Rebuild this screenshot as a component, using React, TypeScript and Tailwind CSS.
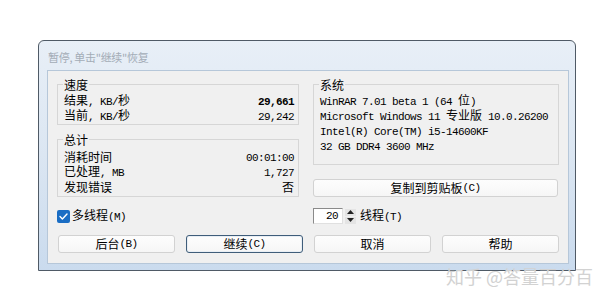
import React from "react";

const CJK = "font-['Noto_Sans_CJK_SC',sans-serif] text-[12px]";
const MONO = "font-['Liberation_Mono','Noto_Sans_CJK_SC',monospace] text-[11px] tracking-[-0.6px]";

function T({ s, bold = false }: { s: string; bold?: boolean }) {
  const parts = s.split(/([\x00-\x7F]+)/).filter((p) => p.length > 0);
  return (
    <>
      {parts.map((p, i) =>
        /^[\x00-\x7F]+$/.test(p) ? (
          <span key={i} className={`${MONO} whitespace-pre ${bold ? "font-bold" : ""}`}>
            {p}
          </span>
        ) : (
          <span key={i} className={CJK}>
            {p}
          </span>
        )
      )}
    </>
  );
}

function Row({ label, value, bold = false }: { label: string; value: string; bold?: boolean }) {
  return (
    <div className="flex items-center justify-between h-[15px] leading-[15px] pl-[1px] pr-[3px] text-black">
      <span>
        <T s={label} />
      </span>
      <span>
        <T s={value} bold={bold} />
      </span>
    </div>
  );
}

function Btn({ label, def = false }: { label: string; def?: boolean }) {
  return (
    <div
      className={`w-[117px] h-[18px] rounded-[3px] flex items-center justify-center leading-[16px] text-black bg-gradient-to-b from-[#fdfdfd] to-[#f6f6f6] ${
        def ? "border border-[#3f5d7a] shadow-[inset_0_0_0_1px_#e8eef4]" : "border border-[#d2d2d2]"
      }`}
    >
      <T s={label} />
    </div>
  );
}

export default function App() {
  return (
    <div className="relative w-[616px] h-[303px] bg-white overflow-hidden pt-[40px] pl-[38px]">
      <div className="w-[538px] h-[231px] border border-[#4f5a66] rounded-t-[6px] bg-gradient-to-b from-[#e8eff7] via-[#dbe6f2] to-[#cadbee] flex flex-col pl-[8px] pr-[6px] pb-[6px]">
        <div className="h-[29px] flex items-center pl-[1px] pt-[2px]">
          <span className="font-['Noto_Sans_CJK_SC',sans-serif] text-[11px] tracking-[-0.3px] text-[#a3acb6] leading-[14px]">
            暂停, 单击"继续"恢复
          </span>
        </div>
        <div className="flex-1 bg-[#f0f0f0] border border-[#b6c7d9] pt-[6px] pl-[9px] pr-[8px]">
          <div className="grid grid-cols-[242px_246px] gap-x-[14px]">
            <div className="flex flex-col">
              <fieldset className="border border-[#d6d6d6] pl-[5px] pr-[1px] pt-[1px] pb-[1px]">
                <legend className="px-[1px] leading-[15px]">
                  <T s="速度" />
                </legend>
                <Row label="结果, KB/秒" value="29,661" bold />
                <Row label="当前, KB/秒" value="29,242" />
              </fieldset>
              <fieldset className="mt-[7px] border border-[#d6d6d6] pl-[5px] pr-[1px] pt-[2px] pb-[2px]">
                <legend className="px-[1px] leading-[15px]">
                  <T s="总计" />
                </legend>
                <Row label="消耗时间" value="00:01:00" />
                <Row label="已处理, MB" value="1,727" />
                <Row label="发现错误" value="否" />
              </fieldset>
            </div>
            <div className="flex flex-col">
              <fieldset className="border border-[#d6d6d6] pl-[5px] pr-[1px] pt-[0px] pb-[12px]">
                <legend className="px-[1px] leading-[15px]">
                  <T s="系统" />
                </legend>
                {[
                  "WinRAR 7.01 beta 1 (64 位)",
                  "Microsoft Windows 11 专业版 10.0.26200",
                  "Intel(R) Core(TM) i5-14600KF",
                  "32 GB DDR4 3600 MHz",
                ].map((l) => (
                  <div key={l} className="h-[15px] leading-[15px] pl-[1px] whitespace-nowrap text-black">
                    <T s={l} />
                  </div>
                ))}
              </fieldset>
              <div className="mt-[14px] h-[18px] w-[245px] rounded-[3px] border border-[#d2d2d2] bg-gradient-to-b from-[#fdfdfd] to-[#f6f6f6] flex items-center justify-center text-black leading-[16px]">
                <T s="复制到剪贴板(C)" />
              </div>
            </div>
          </div>

          <div className="grid grid-cols-[242px_246px] gap-x-[14px] mt-[10px] h-[16px]">
            <div className="flex items-center gap-[2px]">
              <div className="w-[13px] h-[13px] rounded-[2px] bg-[#1a6dc4] flex items-center justify-center">
                <svg width="11" height="11" viewBox="0 0 11 11">
                  <path d="M2 5.6 L4.4 8 L9 3" stroke="white" strokeWidth="1.4" fill="none" strokeLinecap="round" strokeLinejoin="round" />
                </svg>
              </div>
              <span className="text-black leading-[15px]">
                <T s="多线程(M)" />
              </span>
            </div>
            <div className="flex items-center">
              <div className="w-[30px] h-[16px] bg-white border border-[#8a8a8a] border-r-[#e0e0e0] border-b-[#e0e0e0] flex items-center justify-end pr-[4px] leading-[14px] text-black">
                <T s="20" />
              </div>
              <div className="ml-[2px] w-[11px] h-[15px] flex flex-col gap-[1px]">
                <div className="flex-1 bg-[#e4e4e4] flex items-center justify-center">
                  <svg width="7" height="4" viewBox="0 0 7 4">
                    <path d="M0 4 L3.5 0 L7 4 Z" fill="#222" />
                  </svg>
                </div>
                <div className="flex-1 bg-[#e4e4e4] flex items-center justify-center">
                  <svg width="7" height="4" viewBox="0 0 7 4">
                    <path d="M0 0 L3.5 4 L7 0 Z" fill="#222" />
                  </svg>
                </div>
              </div>
              <span className="ml-[4px] text-black leading-[15px]">
                <T s="线程(T)" />
              </span>
            </div>
          </div>

          <div className="flex gap-[11px] mt-[12px] pl-[1px]">
            <Btn label="后台(B)" />
            <Btn label="继续(C)" def />
            <Btn label="取消" />
            <Btn label="帮助" />
          </div>
        </div>
      </div>
      <div className="absolute left-[446px] top-[264px] font-['Noto_Sans_CJK_SC',sans-serif] text-[18px] leading-[24px] text-[#d2d2d2] whitespace-nowrap">
        知乎 @答量百分百
      </div>
    </div>
  );
}
